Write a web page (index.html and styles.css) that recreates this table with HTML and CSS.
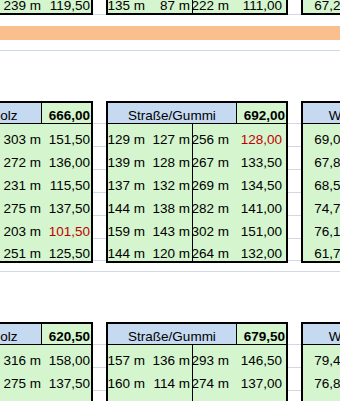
FILE: index.html
```html
<!DOCTYPE html>
<html lang="de">
<head>
<meta charset="utf-8">
<title>Streckenauswertung</title>
<link rel="stylesheet" href="styles.css">
</head>
<body>
<div class="sheet">

  <div class="block tail">
    <div class="tbl lt">
      <div class="c"></div><div class="c b"></div><div class="c k">239 m</div><div class="c d">119,50</div>
    </div>
    <div class="gap"><i></i></div>
    <div class="tbl mt">
      <div class="c">135 m</div><div class="c b">87 m</div><div class="c k">222 m</div><div class="c d">111,00</div>
    </div>
    <div class="gap"><i></i></div>
    <div class="tbl rt">
      <div class="c">67,20</div><div class="c"></div><div class="c"></div><div class="c"></div>
    </div>
  </div>

  <div class="sp"></div>
  <div class="orange"></div>
  <div class="rule"></div>
  <div class="blank"></div>

  <div class="block full">
    <div class="tbl lt">
      <div class="h hl">Schotter/Holz</div><div class="h hv">666,00</div>
      <div class="c"></div><div class="c b"></div><div class="c k">303 m</div><div class="c d">151,50</div>
      <div class="c"></div><div class="c b"></div><div class="c k">272 m</div><div class="c d">136,00</div>
      <div class="c"></div><div class="c b"></div><div class="c k">231 m</div><div class="c d">115,50</div>
      <div class="c"></div><div class="c b"></div><div class="c k">275 m</div><div class="c d">137,50</div>
      <div class="c"></div><div class="c b"></div><div class="c k">203 m</div><div class="c d neg">101,50</div>
      <div class="c"></div><div class="c b"></div><div class="c k">251 m</div><div class="c d">125,50</div>
    </div>
    <div class="gap"><i></i><i></i><i></i><i></i><i></i><i></i><i></i></div>
    <div class="tbl mt">
      <div class="h hl">Straße/Gummi</div><div class="h hv">692,00</div>
      <div class="c">129 m</div><div class="c b">127 m</div><div class="c k">256 m</div><div class="c d neg">128,00</div>
      <div class="c">139 m</div><div class="c b">128 m</div><div class="c k">267 m</div><div class="c d">133,50</div>
      <div class="c">137 m</div><div class="c b">132 m</div><div class="c k">269 m</div><div class="c d">134,50</div>
      <div class="c">144 m</div><div class="c b">138 m</div><div class="c k">282 m</div><div class="c d">141,00</div>
      <div class="c">159 m</div><div class="c b">143 m</div><div class="c k">302 m</div><div class="c d">151,00</div>
      <div class="c">144 m</div><div class="c b">120 m</div><div class="c k">264 m</div><div class="c d">132,00</div>
    </div>
    <div class="gap"><i></i><i></i><i></i><i></i><i></i><i></i><i></i></div>
    <div class="tbl rt">
      <div class="h hl">Wiese/Schotter</div><div class="h hv"></div>
      <div class="c">69,00</div><div class="c"></div><div class="c"></div><div class="c"></div>
      <div class="c">67,80</div><div class="c"></div><div class="c"></div><div class="c"></div>
      <div class="c">68,50</div><div class="c"></div><div class="c"></div><div class="c"></div>
      <div class="c">74,70</div><div class="c"></div><div class="c"></div><div class="c"></div>
      <div class="c">76,10</div><div class="c"></div><div class="c"></div><div class="c"></div>
      <div class="c">61,70</div><div class="c"></div><div class="c"></div><div class="c"></div>
    </div>
  </div>

  <div class="rule short"></div>
  <div class="blank"></div>

  <div class="block part">
    <div class="tbl lt">
      <div class="h hl">Schotter/Holz</div><div class="h hv">620,50</div>
      <div class="c"></div><div class="c b"></div><div class="c k">316 m</div><div class="c d">158,00</div>
      <div class="c"></div><div class="c b"></div><div class="c k">275 m</div><div class="c d">137,50</div>
      <div class="c"></div><div class="c b"></div><div class="c k">197 m</div><div class="c d">98,50</div>
    </div>
    <div class="gap"><i></i><i></i><i></i><i></i></div>
    <div class="tbl mt">
      <div class="h hl">Straße/Gummi</div><div class="h hv">679,50</div>
      <div class="c">157 m</div><div class="c b">136 m</div><div class="c k">293 m</div><div class="c d">146,50</div>
      <div class="c">160 m</div><div class="c b">114 m</div><div class="c k">274 m</div><div class="c d">137,00</div>
      <div class="c">131 m</div><div class="c b">128 m</div><div class="c k">259 m</div><div class="c d">129,50</div>
    </div>
    <div class="gap"><i></i><i></i><i></i><i></i></div>
    <div class="tbl rt">
      <div class="h hl">Wiese/Schotter</div><div class="h hv"></div>
      <div class="c">79,40</div><div class="c"></div><div class="c"></div><div class="c"></div>
      <div class="c">76,80</div><div class="c"></div><div class="c"></div><div class="c"></div>
      <div class="c">81,40</div><div class="c"></div><div class="c"></div><div class="c"></div>
    </div>
  </div>

</div>
</body>
</html>
```

FILE: styles.css
```css
* {
  box-sizing: border-box;
}

html,
body {
  margin: 0;
  padding: 0;
  background: #ffffff;
}

body {
  width: 340px;
  height: 401px;
  overflow: hidden;
  font-family: "Liberation Sans", Arial, sans-serif;
  font-size: 13.5px;
  color: #000000;
}

.sheet {
  width: 640px;
  margin-left: -89px;
  margin-top: -11px;
}

/* horizontal filler rows */
.sp {
  height: 11px;
}

.orange {
  height: 14px;
  background: #fabf8f;
}

.rule {
  height: 11px;
  border-bottom: 1px solid #d0d7e5;
}

.rule.short {
  height: 9px;
}

.blank {
  height: 50px;
}

/* blocks of tables */
.block {
  display: flex;
  align-items: stretch;
}

.tbl {
  display: grid;
  width: 182px;
  grid-template-columns: 39px 46px 44px 49px;
  border: 2px solid #000000;
  background: #d4f5cd;
}

.tbl.lt {
  grid-template-columns: 37px 46px 46px 49px;
}

.tbl.rt {
  grid-template-columns: 48px 48px 48px 34px;
}

.tail .tbl {
  grid-template-rows: 22px;
}

.full .tbl {
  grid-template-rows: 21px repeat(5, 23px) 22px;
}

.part .tbl {
  grid-template-rows: 21px repeat(3, 23px);
}

.gap {
  display: grid;
  width: 13px;
  padding: 2px 0;
}

.tail .gap {
  grid-template-rows: 24px;
  padding: 2px 0 0;
}

.full .gap {
  grid-template-rows: 21px repeat(5, 23px) 22px;
}

.part .gap {
  grid-template-rows: 21px repeat(3, 23px);
}

.gap i {
  display: block;
  border-bottom: 1px solid #d0d7e5;
}

/* header cells */
.h {
  display: flex;
  align-items: flex-end;
  line-height: 15px;
  padding-bottom: 0;
  border-bottom: 1px solid #000000;
  white-space: nowrap;
}

.hl {
  grid-column: 1 / 4;
  justify-content: center;
  background: #c5d9f1;
  border-right: 1px solid #000000;
}

.hv {
  justify-content: flex-end;
  font-weight: bold;
  padding-right: 1px;
}

/* data cells */
.c {
  display: flex;
  align-items: flex-end;
  justify-content: flex-end;
  line-height: 15px;
  padding: 0 2px 0 0;
  white-space: nowrap;
}

.c.b {
  border-right: 1px solid #000000;
}

.lt .c.k {
  padding-right: 1px;
}

.lt .c.d {
  padding-right: 1px;
}

.mt .c.k {
  padding-right: 8px;
}

.mt .c.d {
  padding-right: 4px;
}

.rt .c {
  padding-right: 3px;
}

.neg {
  color: #c00000;
}
```
